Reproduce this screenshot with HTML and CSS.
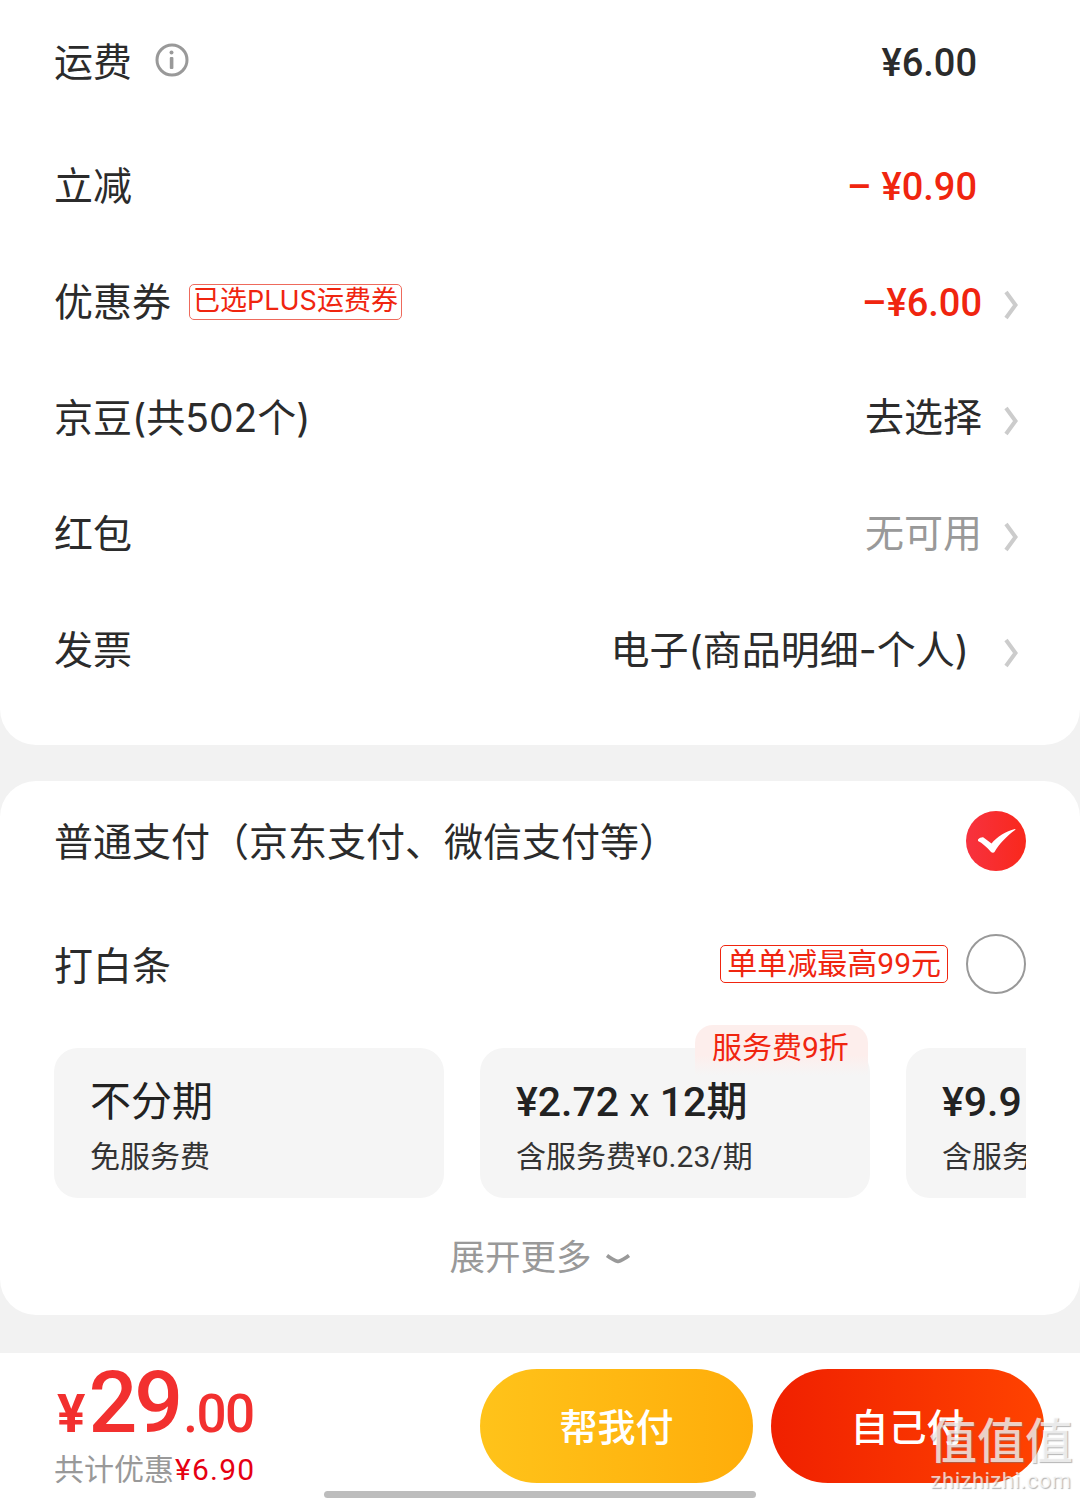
FILE: index.html
```html
<!DOCTYPE html>
<html lang="zh-CN">
<head>
  <meta charset="UTF-8" />
  <title>确认订单</title>
  <link rel="stylesheet" href="styles.css">
</head>
<body>

  <section class="card fees">
    <div class="row row-first">
      <div class="row-left">
        <span class="label">运费</span>
        <svg class="info" viewBox="0 0 34 34" width="34" height="34">
          <circle cx="17" cy="17" r="15" fill="none" stroke="#999" stroke-width="3"/>
          <circle cx="16.500" cy="9.500" r="2" fill="#999"/>
          <rect x="14.800" y="14" width="3.600" height="12" rx="1" fill="#999"/>
        </svg>
      </div>
      <span class="amount amount-plain">¥6.00</span>
    </div>
    <div class="row">
      <span class="label">立减</span>
      <span class="amount amount-plain red"><span class="minus">–</span>¥0.90</span>
    </div>
    <div class="row">
      <div class="row-left">
        <span class="label">优惠券</span>
        <span class="coupon-tag">已选PLUS运费券</span>
      </div>
      <div class="row-right">
        <span class="amount red">–¥6.00</span>
        <svg class="chevron" viewBox="0 0 14 30" width="14" height="30"><path d="M2 2l9.500 13L2 28" fill="none" stroke="#ccc" stroke-width="4"/></svg>
      </div>
    </div>
    <div class="row">
      <span class="label">京豆(共502个)</span>
      <div class="row-right">
        <span class="value">去选择</span>
        <svg class="chevron" viewBox="0 0 14 30" width="14" height="30"><path d="M2 2l9.500 13L2 28" fill="none" stroke="#ccc" stroke-width="4"/></svg>
      </div>
    </div>
    <div class="row">
      <span class="label">红包</span>
      <div class="row-right">
        <span class="value muted">无可用</span>
        <svg class="chevron" viewBox="0 0 14 30" width="14" height="30"><path d="M2 2l9.500 13L2 28" fill="none" stroke="#ccc" stroke-width="4"/></svg>
      </div>
    </div>
    <div class="row">
      <span class="label">发票</span>
      <div class="row-right">
        <span class="value invoice">电子(商品明细-个人)</span>
        <svg class="chevron" viewBox="0 0 14 30" width="14" height="30"><path d="M2 2l9.500 13L2 28" fill="none" stroke="#ccc" stroke-width="4"/></svg>
      </div>
    </div>
  </section>

  <section class="card pay">
    <div class="pay-row">
      <span class="label">普通支付（京东支付、微信支付等）</span>
      <svg class="radio" viewBox="0 0 60 60" width="60" height="60">
        <defs>
          <linearGradient id="checkFill" x1="0" x2="1" y1="0" y2="0">
            <stop offset="0" stop-color="#f7323f"/>
            <stop offset="1" stop-color="#f9281c"/>
          </linearGradient>
        </defs>
        <circle cx="30" cy="30" r="30" fill="url(#checkFill)"/>
        <path d="M12 28.500c1.500-1.500 4-2.500 5.500-2l8 6C31 26 40 20 49 18c.5 0 .5.500 0 1C41 25 33 33 28.500 41c-.5 1-2.500 1-3.500 0C21 36 16 32 12 30z" fill="#fff"/>
      </svg>
    </div>
    <div class="pay-row pay-row-baitiao">
      <span class="label">打白条</span>
      <div class="row-right">
        <span class="promo-tag">单单减最高99元</span>
        <span class="radio-empty"></span>
      </div>
    </div>

    <div class="plans">
      <div class="plan">
        <div class="plan-title">不分期</div>
        <div class="plan-sub">免服务费</div>
      </div>
      <div class="plan">
        <span class="plan-badge">服务费9折</span>
        <div class="plan-title num">¥2.72 <span class="times">x</span> 12期</div>
        <div class="plan-sub num">含服务费¥0.23/期</div>
      </div>
      <div class="plan">
        <div class="plan-title num">¥9.9</div>
        <div class="plan-sub num">含服务费</div>
      </div>
    </div>

    <div class="more">
      <span>展开更多</span>
      <svg viewBox="0 0 26 12" width="26" height="12"><path d="M2 2.500c4 3 7 5 11 6 4-1 7-3 11-6" fill="none" stroke="#999" stroke-width="3.600"/></svg>
    </div>
  </section>

  <footer class="bottom-bar">
    <div class="total">
      <div class="price"><span class="yen">¥</span><span class="whole">29</span><span class="cents">.00</span></div>
      <div class="saved">共计优惠<span class="saved-amount">¥6.90</span></div>
    </div>
    <div class="actions">
      <button class="btn btn-yellow">帮我付</button>
      <button class="btn btn-red">自己付</button>
    </div>
  </footer>

  <div class="home-bar"></div>

  <div class="watermark">
    <div class="wm-big">值值值</div>
    <div class="wm-small">zhizhizhi.com</div>
  </div>

</body>
</html>
```

FILE: styles.css
```css
:root {
  --text: #2b2b2b;
  --muted: #999;
  --red: #f0250f;
  --price: #f2302f;
  --page: #f2f2f2;
  --plan-bg: #f5f5f5;
}

* {
  box-sizing: border-box;
}

body {
  margin: 0;
  height: 1500px;
  overflow: hidden;
  position: relative;
  background: var(--page);
  color: var(--text);
  font-family: "Roboto", "Noto Sans CJK SC", sans-serif;
}

.card {
  background: #fff;
}

.fees {
  height: 745px;
  padding: 5px 62px 0 54px;
  border-radius: 0 0 36px 36px;
}

.row {
  height: 116px;
  display: flex;
  align-items: center;
  justify-content: space-between;
}

.row-first {
  margin-bottom: 8px;
}

.row-left, .row-right {
  display: flex;
  align-items: center;
}

.label, .value {
  font-family: "Inter", "Noto Sans CJK SC", sans-serif;
  font-size: 39px;
  line-height: 44px;
}

.row .label {
  padding-bottom: 2px;
}

.value {
  padding-bottom: 5px;
}

.info {
  margin-left: 23px;
  margin-top: -6px;
}

.amount {
  font-size: 38px;
  font-weight: 500;
  line-height: 44px;
}

.amount-plain {
  margin-right: 41px;
}

.red {
  color: var(--red);
}

.minus {
  margin-right: 10px;
}

.coupon-tag {
  margin-left: 18px;
  margin-top: -2px;
  height: 36px;
  padding: 0 3px;
  border: 1px solid #ee6a5c;
  border-radius: 5px;
  color: var(--red);
  font-family: "Inter", "Noto Sans CJK SC", sans-serif;
  font-size: 27px;
  line-height: 32px;
  white-space: nowrap;
}

.chevron {
  margin-left: 22px;
  margin-top: 3px;
}

.muted {
  color: var(--muted);
}

.invoice {
  margin-right: 13px;
  padding-bottom: 2px;
}

.pay {
  margin-top: 36px;
  height: 534px;
  padding: 30px 54px 0 54px;
  border-radius: 36px;
}

.pay-row {
  height: 60px;
  display: flex;
  align-items: center;
  justify-content: space-between;
}

.pay-row .label {
  padding-top: 2px;
}

.pay-row-baitiao {
  margin-top: 63px;
}

.pay-row-baitiao .label {
  padding-top: 4px;
}

.promo-tag {
  height: 38px;
  margin-right: 18px;
  padding: 0 6px;
  border: 1px solid var(--red);
  border-radius: 5px;
  color: var(--red);
  font-size: 30px;
  line-height: 36px;
  white-space: nowrap;
}

.radio-empty {
  width: 60px;
  height: 60px;
  border: 2px solid #999;
  border-radius: 50%;
}

.plans {
  margin-top: 31px;
  padding-top: 23px;
  display: flex;
  gap: 36px;
  overflow: hidden;
}

.plan {
  position: relative;
  flex: 0 0 390px;
  height: 150px;
  padding: 28px 36px 0 36px;
  background: var(--plan-bg);
  border-radius: 24px;
}

.plan-title {
  font-size: 41px;
  line-height: 52px;
  color: #222;
  white-space: nowrap;
}

.plan-title.num {
  font-weight: 500;
}

.times {
  font-weight: 400;
}

.plan-sub {
  margin-top: 9px;
  font-size: 30px;
  line-height: 40px;
  color: #333;
  white-space: nowrap;
}

.plan-badge {
  position: absolute;
  top: -23px;
  right: 2px;
  width: 173px;
  height: 50px;
  padding-left: 17px;
  border-radius: 18px 18px 0 0;
  background: linear-gradient(#fdeeec 60%, #f5f5f5);
  color: var(--red);
  font-size: 30px;
  line-height: 46px;
}

.more {
  margin-top: 36px;
  display: flex;
  align-items: center;
  justify-content: center;
  gap: 13px;
  font-size: 35.5px;
  line-height: 48px;
  color: var(--muted);
}

.more svg {
  margin-top: 2px;
}

.bottom-bar {
  position: absolute;
  left: 0;
  right: 0;
  bottom: 0;
  height: 147px;
  padding: 16px 36px 0 54px;
  background: #fff;
  display: flex;
  justify-content: space-between;
}

.price {
  height: 74px;
  color: var(--price);
  font-weight: 500;
  line-height: 67px;
  white-space: nowrap;
}

.yen {
  font-size: 53px;
  font-weight: 700;
  margin-left: 3px;
}

.whole {
  font-size: 86px;
  letter-spacing: -3px;
  margin-left: 3px;
}

.cents {
  font-size: 53px;
  letter-spacing: -1.5px;
  margin-left: 3px;
}

.saved {
  margin-top: 7px;
  font-size: 30px;
  line-height: 40px;
  color: var(--muted);
  white-space: nowrap;
}

.saved-amount {
  color: #e60012;
  letter-spacing: 1.2px;
  margin-left: 1px;
}

.actions {
  display: flex;
  gap: 18px;
}

.btn {
  width: 273px;
  height: 114px;
  padding: 0 0 3px;
  border: none;
  border-radius: 57px;
  color: #fff;
  font-family: inherit;
  font-size: 38px;
  font-weight: 500;
}

.btn-yellow {
  background: linear-gradient(90deg, #ffc31a, #ffad0a);
}

.btn-red {
  background: linear-gradient(90deg, #f02000, #ff4300);
}

.home-bar {
  position: absolute;
  left: 324px;
  bottom: 2px;
  width: 432px;
  height: 7px;
  border-radius: 4px;
  background: #bdbdbd;
}

.watermark {
  position: absolute;
  left: 928px;
  top: 1416px;
  width: 146px;
  text-align: center;
  color: rgba(255, 255, 255, 0.72);
  text-shadow: 1px 1px 1px rgba(120, 120, 120, 0.55);
  white-space: nowrap;
}

.wm-big {
  font-size: 48px;
  line-height: 52px;
  font-weight: 500;
}

.wm-small {
  font-size: 22px;
  line-height: 26px;
  letter-spacing: 0.5px;
}
```
